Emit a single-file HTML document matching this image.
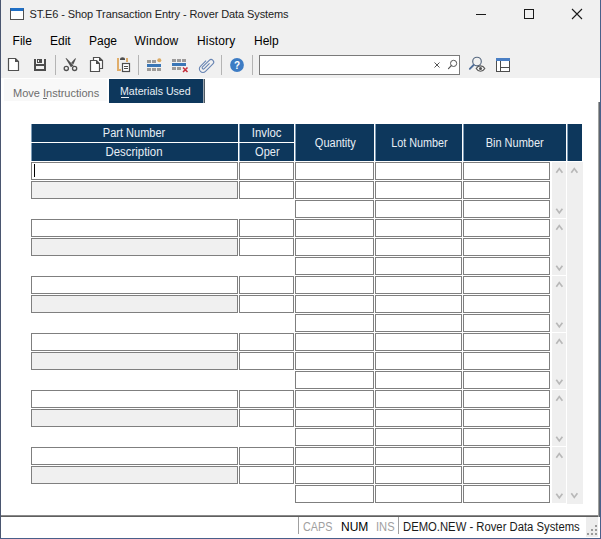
<!DOCTYPE html>
<html><head><meta charset="utf-8">
<style>
*{margin:0;padding:0;box-sizing:border-box}
html,body{width:601px;height:539px;overflow:hidden;background:#fff}
body{position:relative;font-family:"Liberation Sans",sans-serif;color:#000}
.a{position:absolute}
.t{position:absolute;white-space:pre;line-height:1}
.in{position:absolute;height:18px;border:1px solid #7f7f7f;background:#fff}
.hd{position:absolute;border-left:1px solid #7d9cb8;background:#0d375c;color:#e8eef5;font-size:12px;text-align:center;white-space:pre}
.hd span{display:inline-block;transform:scaleX(0.917);transform-origin:50% 50%}
.sb{position:absolute;width:15px;background:#efefef}
.sb span{position:absolute;left:4px;width:7px;height:4px}
.up{}
.dn{}
</style></head><body>
<!-- window frame -->
<div class="a" style="left:0;top:0;width:601px;height:78px;background:#f0f0f0"></div>
<div class="a" style="left:0;top:0;width:1px;height:539px;background:#4a5670"></div>
<div class="a" style="left:600px;top:0;width:1px;height:539px;background:#4a5f8a"></div>
<div class="a" style="left:0;top:538px;width:601px;height:1px;background:#4a5f8a"></div>

<!-- title -->
<div class="a" style="left:10px;top:8px;width:14px;height:12px;border:1px solid #505050;border-top:3px solid #1f6fc6;background:#fff"></div>
<div class="t" style="left:29.5px;top:9px;font-size:11px;letter-spacing:-0.1px;color:#222">ST.E6 - Shop Transaction Entry - Rover Data Systems</div>
<div class="a" style="left:476px;top:14px;width:10px;height:1px;background:#1a1a1a"></div>
<div class="a" style="left:524px;top:9px;width:10px;height:10px;border:1px solid #1a1a1a"></div>
<svg class="a" style="left:571px;top:8px" width="12" height="12"><path d="M1 1L11 11M11 1L1 11" stroke="#1a1a1a" stroke-width="1.1"/></svg>

<!-- menu -->
<div class="t" style="left:12.6px;top:35px;font-size:12px">File</div>
<div class="t" style="left:50px;top:35px;font-size:12px">Edit</div>
<div class="t" style="left:89px;top:35px;font-size:12px">Page</div>
<div class="t" style="left:134.5px;top:35px;font-size:12px;letter-spacing:0.2px">Window</div>
<div class="t" style="left:197px;top:35px;font-size:12px;letter-spacing:0.15px">History</div>
<div class="t" style="left:254px;top:35px;font-size:12px">Help</div>

<!-- toolbar -->
<div class="a" style="left:259px;top:55px;width:201px;height:20px;border:1px solid #7a7a7a;background:#fff"></div>

<svg class="a" style="left:0;top:0" width="601" height="80" viewBox="0 0 601 80">
 <g shape-rendering="crispEdges">
  <!-- separators -->
  <rect x="55" y="55" width="1" height="20" fill="#b4b4b4"/>
  <rect x="138" y="55" width="1" height="20" fill="#b4b4b4"/>
  <rect x="221" y="55" width="1" height="20" fill="#b4b4b4"/>
  <rect x="252" y="55" width="1" height="20" fill="#b4b4b4"/>
 </g>
 <!-- new doc -->
 <path d="M8.5 58.5H15.5L18.5 61.5V70.5H8.5Z" fill="#fff" stroke="#505050" stroke-width="1.2"/>
 <path d="M15 58V62H19Z" fill="#505050"/>
 <!-- save -->
 <g fill="#4d4d4d" shape-rendering="crispEdges">
  <rect x="34" y="59" width="2" height="12"/>
  <rect x="44" y="59" width="2" height="12"/>
  <rect x="34" y="64" width="12" height="2"/>
  <rect x="34" y="69" width="12" height="2"/>
  <rect x="37" y="59" width="5" height="4"/>
 </g>
 <rect x="38" y="60" width="1" height="2" fill="#f0f0f0"/>
 <!-- scissors -->
 <path d="M65.5 58.2L66.6 58.2L73.6 65.4L70.9 67.2Z" fill="#505050"/>
 <path d="M75.2 58.2L76 58.6L73.3 64.4L71.2 62.8Z" fill="#505050"/>
 <circle cx="66.3" cy="68.4" r="2.1" fill="none" stroke="#505050" stroke-width="1.3"/>
 <circle cx="74.6" cy="68.4" r="2.1" fill="none" stroke="#505050" stroke-width="1.3"/>
 <!-- copy -->
 <path d="M93.5 60V57.5H99.5L102.5 60.5V68.5H100" fill="#fff" stroke="#505050" stroke-width="1.2"/>
 <path d="M99 57V61H103Z" fill="#505050"/>
 <path d="M90.5 60.5H96.5L99.5 63.5V71.5H90.5Z" fill="#fff" stroke="#505050" stroke-width="1.2"/>
 <path d="M96 60V64H100Z" fill="#505050"/>
 <!-- paste -->
 <path d="M117 58H119V69H121V71H117Z" fill="#e0ad6a"/>
 <rect x="126" y="58" width="2" height="4" fill="#e0ad6a"/>
 <path d="M120 60V58.8Q120 57.2 122.5 57.2Q125 57.2 125 58.8V60Z" fill="#4f4f4f"/>
 <rect x="122.5" y="63.5" width="7" height="8" fill="#fff" stroke="#4d4d4d" stroke-width="1.2"/>
 <rect x="124" y="66" width="4" height="1" fill="#4d4d4d"/>
 <rect x="124" y="68" width="4" height="1" fill="#4d4d4d"/>
 <!-- insert row -->
 <g shape-rendering="crispEdges">
  <rect x="147" y="60" width="4" height="3" fill="#9c9a96"/>
  <rect x="152" y="60" width="4" height="3" fill="#9c9a9c"/>
  <rect x="147" y="64" width="14" height="3" fill="#3a76b6"/>
  <rect x="147" y="68" width="4" height="3" fill="#9c9a98"/>
  <rect x="152" y="68" width="4" height="3" fill="#9c9a98"/>
  <rect x="157" y="68" width="4" height="3" fill="#9c9a98"/>
 </g>
 <circle cx="159.3" cy="60.3" r="2" fill="#d9a964"/>
 <!-- delete row -->
 <g shape-rendering="crispEdges">
  <rect x="172" y="59" width="4" height="3" fill="#9c9a9a"/>
  <rect x="177" y="59" width="4" height="3" fill="#9c9a9a"/>
  <rect x="182" y="59" width="4" height="3" fill="#9c9a9a"/>
  <rect x="172" y="63" width="14" height="3" fill="#3a76b6"/>
  <rect x="172" y="67" width="4" height="3" fill="#9c9a9a"/>
  <rect x="177" y="67" width="4" height="3" fill="#9c9a96"/>
 </g>
 <path d="M183 67.5L187.5 72M187.5 67.5L183 72" stroke="#c42f3c" stroke-width="1.6"/>
 <!-- paperclip -->
 <g transform="translate(206.2 65) rotate(45)">
  <path d="M1.2 -3.5V4A1.2 1.2 0 0 1 -1.2 4V-5.5A2.6 2.6 0 0 1 4 -5.5V5A3.6 3.6 0 0 1 -3.2 5V-3" fill="none" stroke="#6683b2" stroke-width="1.05"/>
 </g>
 <!-- help -->
 <circle cx="237" cy="65" r="6.9" fill="#3d7cc4"/>
 <text x="237" y="69" text-anchor="middle" font-family="Liberation Sans" font-weight="bold" font-size="10" fill="#fff">?</text>
 <!-- search box icons -->
 <path d="M434.5 62.5L439.5 67.5M439.5 62.5L434.5 67.5" stroke="#555" stroke-width="1"/>
 <circle cx="453.6" cy="63.4" r="3.1" fill="none" stroke="#555" stroke-width="1"/>
 <path d="M451.3 65.7L448.5 68.6" stroke="#555" stroke-width="1.2" stroke-linecap="round"/>
 <!-- magnifier eye -->
 <circle cx="477" cy="61.5" r="4.3" fill="none" stroke="#56687f" stroke-width="1.15"/>
 <path d="M473.6 65L469.8 68.9" stroke="#4d6c98" stroke-width="1.8" stroke-linecap="round"/>
 <path d="M476.2 68.5C478.2 64.9 482.8 64.9 484.8 68.5C482.8 72.1 478.2 72.1 476.2 68.5Z" fill="#f0f0f0" stroke="#555" stroke-width="1.15"/>
 <circle cx="480.5" cy="68.4" r="1.5" fill="#505050"/>
 <!-- layout -->
 <g shape-rendering="crispEdges">
  <rect x="496.5" y="58.5" width="13" height="13" fill="#fff" stroke="#4d4d4d" stroke-width="1"/>
  <rect x="496" y="58" width="14" height="3" fill="#4a7fc4"/>
  <rect x="500" y="61" width="1" height="10" fill="#4d4d4d"/>
  <rect x="501" y="67" width="8" height="1" fill="#4d4d4d"/>
 </g>
</svg>


<!-- tabs -->
<div class="a" style="left:4px;top:79px;width:103px;height:22px;background:#f8f8f8"></div>
<div class="t" style="left:13px;top:88px;font-size:11px;color:#6d6d6d">Move Instructions</div>
<div class="a" style="left:109px;top:79px;width:94px;height:24px;background:#0d375c"></div><div class="a" style="left:203px;top:79px;width:1px;height:24px;background:#9aa4ae"></div><div class="a" style="left:204px;top:79px;width:1px;height:24px;background:#4f5962"></div>
<div class="t" style="left:120px;top:86px;font-size:10.6px;color:#e8eef5">Materials Used</div>

<div class="a" style="left:43px;top:98px;width:4px;height:1px;background:#6d6d6d"></div>
<div class="a" style="left:121px;top:97px;width:8px;height:1px;background:#e8eef5"></div>
<!-- grid header -->
<div class="hd" style="left:31px;top:124px;width:207px;height:18px;line-height:18px;text-indent:-1px"><span>Part Number</span></div>
<div class="hd" style="left:31px;top:143px;width:207px;height:18px;line-height:18px;text-indent:-1px"><span style="transform:scaleX(0.95)">Description</span></div>
<div class="hd" style="left:239px;top:124px;width:55px;height:18px;line-height:18px"><span style="transform:scaleX(0.95)">Invloc</span></div>
<div class="hd" style="left:239px;top:143px;width:55px;height:18px;line-height:18px"><span>Oper</span></div>
<div class="hd" style="left:295px;top:124px;width:79px;height:37px;line-height:39px"><span>Quantity</span></div>
<div class="hd" style="left:375px;top:124px;width:87px;height:37px;line-height:39px"><span style="transform:scaleX(0.9)">Lot Number</span></div>
<div class="hd" style="left:463px;top:124px;width:103px;height:37px;line-height:39px"><span>Bin Number</span></div>
<div class="hd" style="left:567px;top:124px;width:15px;height:37px"></div>

<div class="in" style="left:31px;top:162px;width:207px;background:#fff"></div>
<div class="in" style="left:239px;top:162px;width:55px"></div>
<div class="in" style="left:295px;top:162px;width:79px"></div>
<div class="in" style="left:375px;top:162px;width:87px"></div>
<div class="in" style="left:463px;top:162px;width:87px"></div>
<div class="in" style="left:31px;top:181px;width:207px;background:#f0f0f0"></div>
<div class="in" style="left:239px;top:181px;width:55px"></div>
<div class="in" style="left:295px;top:181px;width:79px"></div>
<div class="in" style="left:375px;top:181px;width:87px"></div>
<div class="in" style="left:463px;top:181px;width:87px"></div>
<div class="in" style="left:295px;top:200px;width:79px"></div>
<div class="in" style="left:375px;top:200px;width:87px"></div>
<div class="in" style="left:463px;top:200px;width:87px"></div>
<div class="sb" style="left:552px;top:162px;width:14px;height:56px"><svg width="14" height="56" style="position:absolute;left:0;top:0"><path d="M4.3 10.8L7.3 6.6L10.4 10.8M4.3 46.7L7.3 50.9L10.4 46.7" fill="none" stroke="#b8b8b8" stroke-width="1.7"/></svg></div>
<div class="in" style="left:31px;top:219px;width:207px;background:#fff"></div>
<div class="in" style="left:239px;top:219px;width:55px"></div>
<div class="in" style="left:295px;top:219px;width:79px"></div>
<div class="in" style="left:375px;top:219px;width:87px"></div>
<div class="in" style="left:463px;top:219px;width:87px"></div>
<div class="in" style="left:31px;top:238px;width:207px;background:#f0f0f0"></div>
<div class="in" style="left:239px;top:238px;width:55px"></div>
<div class="in" style="left:295px;top:238px;width:79px"></div>
<div class="in" style="left:375px;top:238px;width:87px"></div>
<div class="in" style="left:463px;top:238px;width:87px"></div>
<div class="in" style="left:295px;top:257px;width:79px"></div>
<div class="in" style="left:375px;top:257px;width:87px"></div>
<div class="in" style="left:463px;top:257px;width:87px"></div>
<div class="sb" style="left:552px;top:219px;width:14px;height:56px"><svg width="14" height="56" style="position:absolute;left:0;top:0"><path d="M4.3 10.8L7.3 6.6L10.4 10.8M4.3 46.7L7.3 50.9L10.4 46.7" fill="none" stroke="#b8b8b8" stroke-width="1.7"/></svg></div>
<div class="in" style="left:31px;top:276px;width:207px;background:#fff"></div>
<div class="in" style="left:239px;top:276px;width:55px"></div>
<div class="in" style="left:295px;top:276px;width:79px"></div>
<div class="in" style="left:375px;top:276px;width:87px"></div>
<div class="in" style="left:463px;top:276px;width:87px"></div>
<div class="in" style="left:31px;top:295px;width:207px;background:#f0f0f0"></div>
<div class="in" style="left:239px;top:295px;width:55px"></div>
<div class="in" style="left:295px;top:295px;width:79px"></div>
<div class="in" style="left:375px;top:295px;width:87px"></div>
<div class="in" style="left:463px;top:295px;width:87px"></div>
<div class="in" style="left:295px;top:314px;width:79px"></div>
<div class="in" style="left:375px;top:314px;width:87px"></div>
<div class="in" style="left:463px;top:314px;width:87px"></div>
<div class="sb" style="left:552px;top:276px;width:14px;height:56px"><svg width="14" height="56" style="position:absolute;left:0;top:0"><path d="M4.3 10.8L7.3 6.6L10.4 10.8M4.3 46.7L7.3 50.9L10.4 46.7" fill="none" stroke="#b8b8b8" stroke-width="1.7"/></svg></div>
<div class="in" style="left:31px;top:333px;width:207px;background:#fff"></div>
<div class="in" style="left:239px;top:333px;width:55px"></div>
<div class="in" style="left:295px;top:333px;width:79px"></div>
<div class="in" style="left:375px;top:333px;width:87px"></div>
<div class="in" style="left:463px;top:333px;width:87px"></div>
<div class="in" style="left:31px;top:352px;width:207px;background:#f0f0f0"></div>
<div class="in" style="left:239px;top:352px;width:55px"></div>
<div class="in" style="left:295px;top:352px;width:79px"></div>
<div class="in" style="left:375px;top:352px;width:87px"></div>
<div class="in" style="left:463px;top:352px;width:87px"></div>
<div class="in" style="left:295px;top:371px;width:79px"></div>
<div class="in" style="left:375px;top:371px;width:87px"></div>
<div class="in" style="left:463px;top:371px;width:87px"></div>
<div class="sb" style="left:552px;top:333px;width:14px;height:56px"><svg width="14" height="56" style="position:absolute;left:0;top:0"><path d="M4.3 10.8L7.3 6.6L10.4 10.8M4.3 46.7L7.3 50.9L10.4 46.7" fill="none" stroke="#b8b8b8" stroke-width="1.7"/></svg></div>
<div class="in" style="left:31px;top:390px;width:207px;background:#fff"></div>
<div class="in" style="left:239px;top:390px;width:55px"></div>
<div class="in" style="left:295px;top:390px;width:79px"></div>
<div class="in" style="left:375px;top:390px;width:87px"></div>
<div class="in" style="left:463px;top:390px;width:87px"></div>
<div class="in" style="left:31px;top:409px;width:207px;background:#f0f0f0"></div>
<div class="in" style="left:239px;top:409px;width:55px"></div>
<div class="in" style="left:295px;top:409px;width:79px"></div>
<div class="in" style="left:375px;top:409px;width:87px"></div>
<div class="in" style="left:463px;top:409px;width:87px"></div>
<div class="in" style="left:295px;top:428px;width:79px"></div>
<div class="in" style="left:375px;top:428px;width:87px"></div>
<div class="in" style="left:463px;top:428px;width:87px"></div>
<div class="sb" style="left:552px;top:390px;width:14px;height:56px"><svg width="14" height="56" style="position:absolute;left:0;top:0"><path d="M4.3 10.8L7.3 6.6L10.4 10.8M4.3 46.7L7.3 50.9L10.4 46.7" fill="none" stroke="#b8b8b8" stroke-width="1.7"/></svg></div>
<div class="in" style="left:31px;top:447px;width:207px;background:#fff"></div>
<div class="in" style="left:239px;top:447px;width:55px"></div>
<div class="in" style="left:295px;top:447px;width:79px"></div>
<div class="in" style="left:375px;top:447px;width:87px"></div>
<div class="in" style="left:463px;top:447px;width:87px"></div>
<div class="in" style="left:31px;top:466px;width:207px;background:#f0f0f0"></div>
<div class="in" style="left:239px;top:466px;width:55px"></div>
<div class="in" style="left:295px;top:466px;width:79px"></div>
<div class="in" style="left:375px;top:466px;width:87px"></div>
<div class="in" style="left:463px;top:466px;width:87px"></div>
<div class="in" style="left:295px;top:485px;width:79px"></div>
<div class="in" style="left:375px;top:485px;width:87px"></div>
<div class="in" style="left:463px;top:485px;width:87px"></div>
<div class="sb" style="left:552px;top:447px;width:14px;height:56px"><svg width="14" height="56" style="position:absolute;left:0;top:0"><path d="M4.3 10.8L7.3 6.6L10.4 10.8M4.3 46.7L7.3 50.9L10.4 46.7" fill="none" stroke="#b8b8b8" stroke-width="1.7"/></svg></div>
<div class="sb" style="left:567px;top:162px;width:16px;height:342px"><svg width="16" height="342" style="position:absolute;left:0;top:0"><path d="M4.3 10.8L7.3 6.6L10.4 10.8M4.3 331.2L7.3 335.4L10.4 331.2" fill="none" stroke="#b8b8b8" stroke-width="1.7"/></svg></div>
<div class="a" style="left:34px;top:164px;width:1px;height:13px;background:#000"></div>

<!-- status bar -->
<div class="a" style="left:1px;top:515px;width:599px;height:1px;background:#8a8a8a"></div><div class="a" style="left:1px;top:516px;width:599px;height:1px;background:#5f5f5f"></div>
<div class="a" style="left:598px;top:102px;width:1px;height:415px;background:#a0a2a0"></div><div class="a" style="left:599px;top:102px;width:1px;height:415px;background:#5c6470"></div>
<div class="a" style="left:298px;top:517px;width:1px;height:17px;background:#a0a0a0"></div>
<div class="a" style="left:398px;top:517px;width:1px;height:17px;background:#a0a0a0"></div>
<div class="t" style="left:303px;top:521px;font-size:12px;color:#a0a0a0;transform:scaleX(0.9);transform-origin:0 0">CAPS</div>
<div class="t" style="left:341px;top:521px;font-size:12px;color:#000">NUM</div>
<div class="t" style="left:376px;top:521px;font-size:12px;color:#a0a0a0;transform:scaleX(0.93);transform-origin:0 0">INS</div>
<div class="t" style="left:403px;top:521px;font-size:12px;color:#1a1a1a;transform:scaleX(0.94);transform-origin:0 0">DEMO.NEW - Rover Data Systems</div>
<div class="a" style="left:586px;top:517px;width:12px;height:20px;background:#ededed"></div>
<svg class="a" style="left:586px;top:524px" width="12" height="12" shape-rendering="crispEdges"><g fill="#9a9a9a"><rect x="9" y="1" width="2" height="2"/><rect x="5" y="5" width="2" height="2"/><rect x="9" y="5" width="2" height="2"/><rect x="1" y="9" width="2" height="2"/><rect x="5" y="9" width="2" height="2"/><rect x="9" y="9" width="2" height="2"/></g></svg>
</body></html>
